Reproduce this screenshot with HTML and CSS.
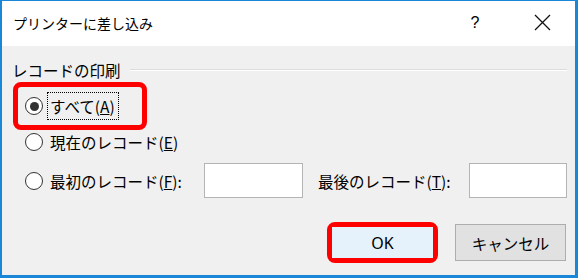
FILE: index.html
```html
<!DOCTYPE html>
<html lang="ja">
<head>
<meta charset="utf-8">
<link rel="stylesheet" href="styles.css">
</head>
<body>
<div class="window">
  <div class="titlebar">
    <span class="title">プリンターに差し込み</span>
    <span class="spacer"></span>
    <span class="tb-btn help">?</span>
    <span class="tb-btn close">
      <svg width="17" height="17" viewBox="0 0 17 17"><path d="M1 1 L16 16 M16 1 L1 16" stroke="#111" stroke-width="1.3" fill="none"/></svg>
    </span>
  </div>
  <div class="content">
    <div class="group-header">
      <span class="group-label">レコードの印刷</span>
      <span class="group-line"></span>
    </div>
    <div class="highlight radio-frame">
      <span class="radio checked"></span>
      <span class="focus-label">すべて(<u>A</u>)</span>
    </div>
    <div class="row row-current">
      <span class="radio"></span>
      <span class="label">現在のレコード(<u>E</u>)</span>
    </div>
    <div class="row row-range">
      <span class="radio"></span>
      <span class="label label-first">最初のレコード(<u>F</u>):</span>
      <span class="textbox box-first"></span>
      <span class="label label-last">最後のレコード(<u>T</u>):</span>
      <span class="textbox box-last"></span>
    </div>
    <div class="buttons">
      <div class="highlight ok-frame">
        <span class="btn btn-ok">OK</span>
      </div>
      <span class="btn btn-cancel">キャンセル</span>
    </div>
  </div>
</div>
</body>
</html>
```

FILE: styles.css
```css
html, body {
  margin: 0;
  padding: 0;
}
body {
  width: 578px;
  height: 278px;
  overflow: hidden;
  font-family: "Noto Sans CJK JP", "Noto Sans", sans-serif;
  color: #000;
}
.window {
  box-sizing: border-box;
  width: 578px;
  height: 278px;
  border-style: solid;
  border-color: #1a86d8;
  border-width: 1px 3px 3px 2px;
  display: flex;
  flex-direction: column;
  background: #f0f0f0;
}
.titlebar {
  height: 45px;
  flex: none;
  background: #fff;
  display: flex;
  align-items: center;
  padding-left: 11px;
  padding-right: 13px;
}
.title {
  font-size: 14px;
  line-height: 20px;
  margin-top: -2px;
}
.spacer { flex: 1; }
.tb-btn {
  width: 40px;
  height: 30px;
  display: flex;
  align-items: center;
  justify-content: center;
  margin-top: -2px;
}
.help {
  font-size: 16px;
  font-family: "Liberation Sans", sans-serif;
  margin-right: 27px;
}
.content {
  flex: 1;
  display: flex;
  flex-direction: column;
  font-size: 15.5px;
}
.group-header {
  display: flex;
  align-items: center;
  margin-top: 14px;
  padding-left: 10px;
  padding-right: 8px;
  height: 20px;
}
.group-label {
  line-height: 20px;
}
.group-line {
  flex: 1;
  margin-left: 9px;
  border-top: 1px solid #dcdcdc;
  border-bottom: 1px solid #fff;
}
.highlight {
  border: 5px solid #ff0000;
  border-radius: 8px;
  box-sizing: border-box;
}
.radio-frame {
  margin-top: 2px;
  margin-left: 11px;
  width: 134px;
  height: 48px;
  display: flex;
  align-items: center;
  padding-left: 7px;
}
.radio {
  flex: none;
  box-sizing: border-box;
  width: 18px;
  height: 18px;
  border: 1px solid #333;
  border-radius: 50%;
  background: #fff;
  display: flex;
  align-items: center;
  justify-content: center;
}
.radio.checked::after {
  content: "";
  width: 9px;
  height: 9px;
  border-radius: 50%;
  background: #333;
}
.focus-label {
  margin-left: 4px;
  border: 1px dotted #000;
  padding: 2px 3px 2px 2px;
  line-height: 22px;
}
.row {
  display: flex;
  align-items: center;
  padding-left: 23px;
}
.row-current {
  height: 24px;
}
.row-current .label {
  margin-left: 7px;
}
.row-range {
  margin-top: 9px;
  height: 35px;
}
.label-first {
  margin-left: 7px;
  width: 154px;
}
.label-last {
  margin-left: 15px;
  width: 151px;
}
.textbox {
  box-sizing: border-box;
  height: 35px;
  background: #fff;
  border: 1px solid #b4b4b4;
}
.box-first { width: 99px; }
.box-last { width: 98px; }
.buttons {
  display: flex;
  align-items: center;
  justify-content: flex-end;
  margin-top: 24px;
  padding-right: 9px;
  gap: 17px;
}
.ok-frame {
  width: 111px;
  height: 41px;
  display: flex;
}
.btn {
  box-sizing: border-box;
  display: flex;
  align-items: center;
  justify-content: center;
  font-size: 15.5px;
}
.btn-ok {
  flex: 1;
  background: #e5f1fb;
  font-family: "Noto Sans", sans-serif;
  font-size: 16px;
}
.btn-cancel {
  width: 111px;
  height: 37px;
  background: #e1e1e1;
  border: 1px solid #adadad;
}
```
